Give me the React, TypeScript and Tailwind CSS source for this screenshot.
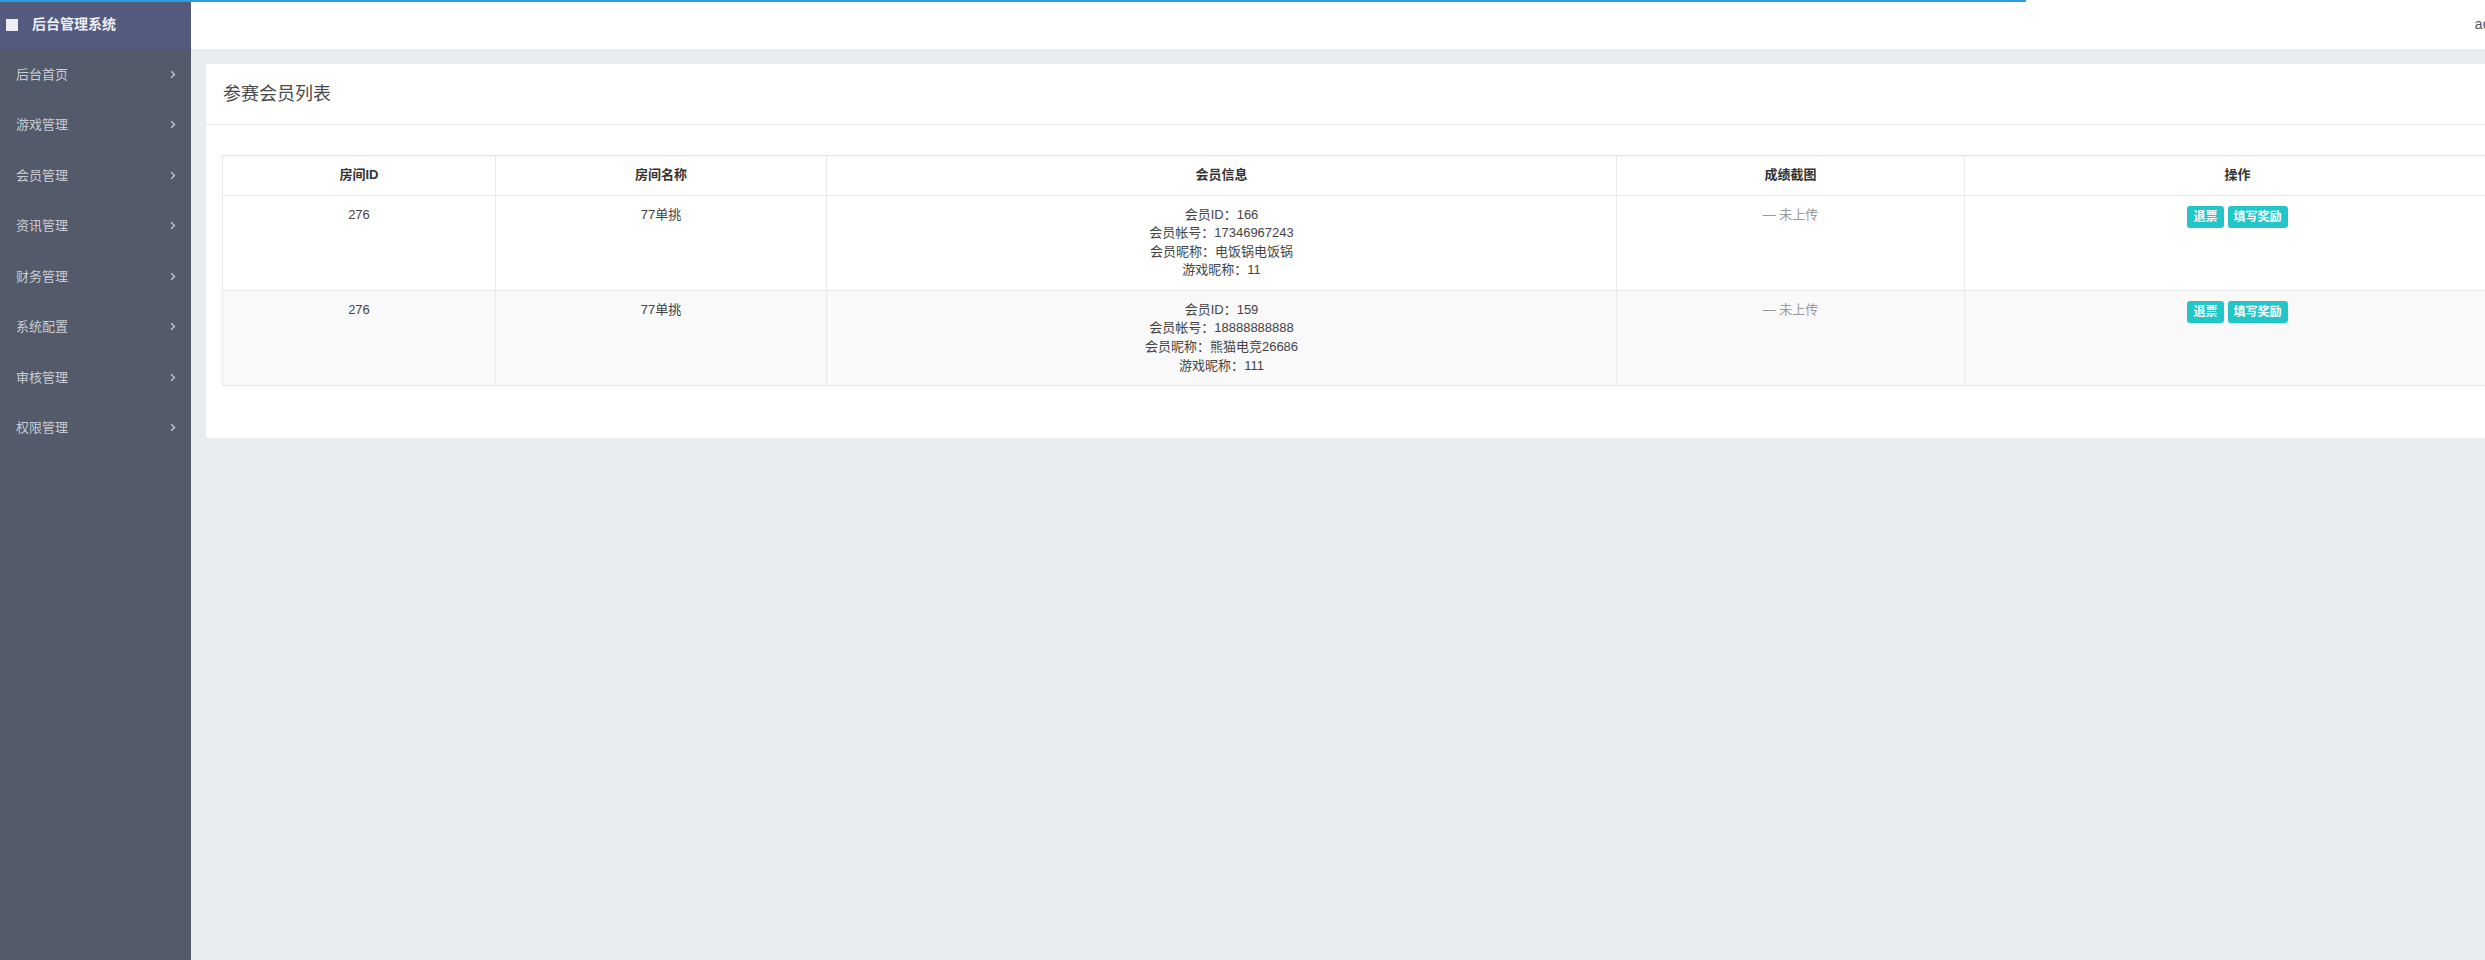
import React from "react";

const menu = ["后台首页", "游戏管理", "会员管理", "资讯管理", "财务管理", "系统配置", "审核管理", "权限管理"];

const rows = [
  { id: "276", name: "77单挑", mid: "166", acc: "17346967243", nick: "电饭锅电饭锅", game: "11", bg: "bg-white" },
  { id: "276", name: "77单挑", mid: "159", acc: "18888888888", nick: "熊猫电竞26686", game: "111", bg: "bg-[#f9f9fa]" },
];

function Chevron() {
  return (
    <svg width="6" height="9" viewBox="0 0 6 9" fill="none" className="shrink-0">
      <path d="M1.2 1.2 L4.5 4.5 L1.2 7.8" stroke="#c9ccd6" strokeWidth="1.3" />
    </svg>
  );
}

export default function App() {
  const font = { fontFamily: '"Liberation Sans", "Noto Sans CJK SC", sans-serif' };
  return (
    <div className="relative flex w-[2485px] h-[960px] overflow-hidden bg-[#e9edf0]" style={font}>
      <div className="absolute top-0 left-0 h-[2px] w-[2026px] bg-[#2a9fdf] z-10" />
      <aside className="w-[191px] shrink-0 h-full bg-[#535a6a] flex flex-col">
        <div className="h-[49px] bg-[#545b7e] flex items-center pl-[6px]">
          <div className="w-[12px] h-[12px] bg-[#eeeef2]" />
          <span className="ml-[14px] text-[14px] font-bold text-[#eceef3]">后台管理系统</span>
        </div>
        {menu.map((m) => (
          <div key={m} className="h-[50.5px] flex items-center justify-between pl-[16px] pr-[15px] text-[13px] text-[#c9ccd4]">
            <span>{m}</span>
            <Chevron />
          </div>
        ))}
      </aside>
      <main className="w-[2350px] shrink-0 flex flex-col">
        <header className="h-[49px] bg-white flex items-center justify-end pr-[28px] text-[14px] text-[#555]">
          admin
        </header>
        <div className="p-[15px]">
          <div className="bg-white rounded-[2px]">
            <div className="h-[61px] flex items-center px-[17px] border-b border-[#e7eaec] text-[18px] text-[#4a4a4a]">
              参赛会员列表
            </div>
            <div className="pt-[30px] px-[16px] pb-[52px]">
              <table className="w-[2288px] border-collapse text-[13px] leading-[18.57px] text-[#555] table-fixed">
                <colgroup>
                  <col className="w-[273px]" />
                  <col className="w-[331px]" />
                  <col className="w-[790px]" />
                  <col className="w-[348px]" />
                  <col className="w-[546px]" />
                </colgroup>
                <thead>
                  <tr className="text-[#333] font-bold">
                    {["房间ID", "房间名称", "会员信息", "成绩截图", "操作"].map((h) => (
                      <th key={h} className="border border-[#e7eaec] border-t-[#dcdfe3] py-[10px] text-center font-bold">
                        {h}
                      </th>
                    ))}
                  </tr>
                </thead>
                <tbody>
                  {rows.map((r, i) => (
                    <tr key={i} className={r.bg}>
                      <td className="border border-[#e7eaec] align-top text-center pt-[10px] pb-[10px] text-[#444]">{r.id}</td>
                      <td className="border border-[#e7eaec] align-top text-center pt-[10px] pb-[10px] text-[#444]">{r.name}</td>
                      <td className="border border-[#e7eaec] align-top text-center pt-[10px] pb-[10px] text-[#444]">
                        <div>会员ID：{r.mid}</div>
                        <div>会员帐号：{r.acc}</div>
                        <div>会员昵称：{r.nick}</div>
                        <div>游戏昵称：{r.game}</div>
                      </td>
                      <td className="border border-[#e7eaec] align-top text-center pt-[10px] pb-[10px] text-[#999]">— 未上传</td>
                      <td className="border border-[#e7eaec] align-top text-center pt-[10px] pb-[10px]">
                        <div className="flex justify-center gap-[4px]">
                          <button className="h-[22px] px-[6px] rounded-[3px] bg-[#23c6c8] text-white text-[12px] leading-[22px] font-bold">退票</button>
                          <button className="h-[22px] px-[6px] rounded-[3px] bg-[#23c6c8] text-white text-[12px] leading-[22px] font-bold">填写奖励</button>
                        </div>
                      </td>
                    </tr>
                  ))}
                </tbody>
              </table>
            </div>
          </div>
        </div>
      </main>
    </div>
  );
}
